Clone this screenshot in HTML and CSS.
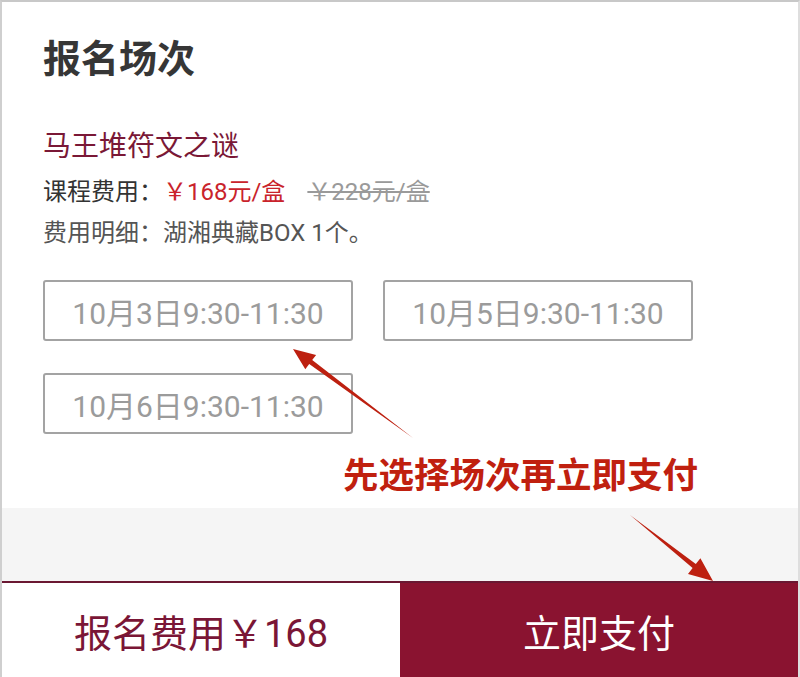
FILE: index.html
```html
<!DOCTYPE html>
<html lang="zh-CN">
<head>
<meta charset="utf-8">
<link rel="stylesheet" href="styles.css">
</head>
<body>
<div class="page">
  <main class="content">
    <h1 class="title">报名场次</h1>
    <div class="course">马王堆符文之谜</div>
    <div class="price-line">课程费用：<span class="price-now">￥168元/盒</span><span class="price-old">￥228元/盒</span></div>
    <div class="detail">费用明细：湖湘典藏BOX 1个。</div>
    <div class="sessions">
      <div class="session">10月3日9:30-11:30</div>
      <div class="session">10月5日9:30-11:30</div>
      <div class="session">10月6日9:30-11:30</div>
    </div>
    <div class="hint">先选择场次再立即支付</div>
  </main>
  <div class="band"></div>
  <footer class="footer">
    <div class="fee">报名费用￥168</div>
    <div class="pay">立即支付</div>
  </footer>
  <svg class="arrows" width="800" height="677" viewBox="0 0 800 677">
    <polygon points="413,438 312.2,360.1 316.1,354.9 293,349 305.3,369.3 309.2,364.1" fill="#bd2010"/>
    <polygon points="630,515 695.8,564.1 700.4,558.2 713,581 688,573.9 692.6,568" fill="#bd2010"/>
  </svg>
</div>
</body>
</html>
```
FILE: styles.css
```css
* { box-sizing: border-box; }
html, body { margin: 0; padding: 0; background: #fff; }
body {
  font-family: Roboto, "Noto Sans CJK SC", sans-serif;
}
.page {
  position: relative;
  width: 800px;
  height: 677px;
  border-top: 2px solid #c8c8c8;
  border-left: 2px solid #cfcfcf;
  border-right: 2px solid #dedede;
  display: flex;
  flex-direction: column;
  overflow: hidden;
}
.content {
  flex: 1;
  padding: 38px 0 0 41px;
}
.title {
  margin: 0;
  font-size: 38px;
  line-height: 38px;
  font-weight: 700;
  color: #363636;
}
.course {
  margin-top: 55px;
  font-size: 28px;
  line-height: 28px;
  color: #7a1836;
}
.price-line {
  margin-top: 19px;
  font-size: 24px;
  line-height: 24px;
  color: #333;
}
.price-now { color: #c9232b; }
.price-old {
  margin-left: 22px;
  color: #9a9a9a;
  text-decoration: line-through;
}
.detail {
  margin-top: 17px;
  font-size: 24px;
  line-height: 24px;
  color: #555;
}
.sessions {
  margin-top: 35px;
  display: grid;
  grid-template-columns: 310px 310px;
  column-gap: 30px;
  row-gap: 32px;
}
.session {
  height: 61px;
  border: 2px solid #a3a3a3;
  border-radius: 3px;
  display: flex;
  align-items: center;
  justify-content: center;
  font-size: 30px;
  color: #9b9b9b;
}
.hint {
  margin-top: 21px;
  padding-left: 300px;
  font-family: "Noto Sans CJK SC", sans-serif;
  font-size: 35.5px;
  line-height: 36px;
  font-weight: 700;
  color: #c0200f;
}
.band {
  height: 73px;
  background: #f5f5f5;
}
.footer {
  height: 96px;
  border-top: 2px solid #6a1832;
  display: flex;
}
.fee, .pay {
  flex: 1;
  display: flex;
  align-items: center;
  justify-content: center;
  font-size: 38px;
}
.fee {
  background: #fff;
  color: #7a1636;
}
.pay {
  background: #8a1330;
  color: #fff;
}
.arrows {
  position: absolute;
  left: -2px;
  top: -2px;
  pointer-events: none;
}
```
